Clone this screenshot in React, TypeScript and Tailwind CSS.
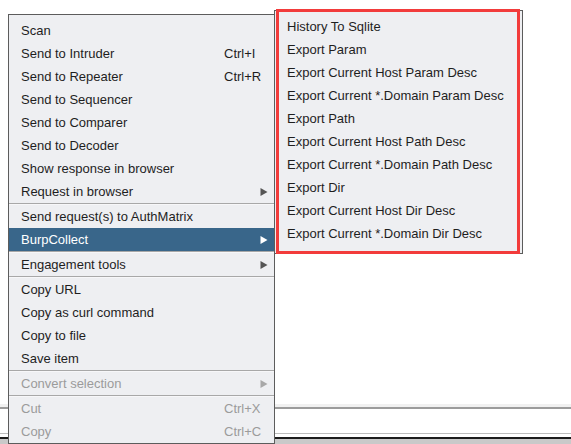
import { ReactNode } from "react";

type Item =
  | { kind: "sep" }
  | { kind: "item"; label: string; shortcut?: string; sub?: boolean; active?: boolean; disabled?: boolean };

const mainItems: Item[] = [
  { kind: "item", label: "Scan" },
  { kind: "item", label: "Send to Intruder", shortcut: "Ctrl+I" },
  { kind: "item", label: "Send to Repeater", shortcut: "Ctrl+R" },
  { kind: "item", label: "Send to Sequencer" },
  { kind: "item", label: "Send to Comparer" },
  { kind: "item", label: "Send to Decoder" },
  { kind: "item", label: "Show response in browser" },
  { kind: "item", label: "Request in browser", sub: true },
  { kind: "sep" },
  { kind: "item", label: "Send request(s) to AuthMatrix" },
  { kind: "item", label: "BurpCollect", sub: true, active: true },
  { kind: "sep" },
  { kind: "item", label: "Engagement tools", sub: true },
  { kind: "sep" },
  { kind: "item", label: "Copy URL" },
  { kind: "item", label: "Copy as curl command" },
  { kind: "item", label: "Copy to file" },
  { kind: "item", label: "Save item" },
  { kind: "sep" },
  { kind: "item", label: "Convert selection", sub: true, disabled: true },
  { kind: "sep" },
  { kind: "item", label: "Cut", shortcut: "Ctrl+X", disabled: true },
  { kind: "item", label: "Copy", shortcut: "Ctrl+C", disabled: true },
];

const subItems = [
  "History To Sqlite",
  "Export Param",
  "Export Current Host Param Desc",
  "Export Current *.Domain Param Desc",
  "Export Path",
  "Export Current Host Path Desc",
  "Export Current *.Domain Path Desc",
  "Export Dir",
  "Export Current Host Dir Desc",
  "Export Current *.Domain Dir Desc",
];

function Arrow({ color }: { color: string }) {
  return (
    <svg width="8" height="10" viewBox="0 0 8 10">
      <path d="M0.5 1 L7.5 5 L0.5 9 Z" fill={color} />
    </svg>
  );
}

function Row({ children, active, disabled }: { children: ReactNode; active?: boolean; disabled?: boolean }) {
  return (
    <div
      className={`flex h-[23px] items-center pl-[12px] ${
        active ? "bg-[#39668a] text-white" : disabled ? "text-[#9b9b9b]" : "text-[#1e1e1e]"
      }`}
    >
      {children}
    </div>
  );
}

export default function App() {
  return (
    <div
      className="relative flex h-[444px] w-[571px] flex-col overflow-hidden bg-white text-[13px]"
      style={{ fontFamily: '"Liberation Sans", Arial, sans-serif' }}
    >
      <div className="flex-1" />
      <div className="h-[3px] bg-[#f1f1f1]" />
      <div className="h-[2px] bg-[#9c9c9c]" />
      <div className="h-[24px] bg-white" />
      <div className="h-px bg-[#bdbdbd]" />
      <div className="h-[3px] bg-white" />
      <div className="h-[2px] bg-[#1c1c1c]" />
      <div className="h-[5px] bg-[#c9c9c9]" />

      {/* main context menu */}
      <div className="absolute left-[8px] top-[14px] w-[267px] border border-[#5c5c5c] bg-[#eeeff2] pt-[4px]">
        {mainItems.map((it, i) =>
          it.kind === "sep" ? (
            <div key={i} className="h-[2px] border-t border-[#a8a8a8] bg-[#f7f7f9]" />
          ) : (
            <Row key={i} active={it.active} disabled={it.disabled}>
              <span className="w-[203px] shrink-0 whitespace-nowrap">{it.label}</span>
              <span className="w-[36px] shrink-0 whitespace-nowrap">{it.shortcut ?? ""}</span>
              {it.sub && (
                <Arrow color={it.active ? "#ffffff" : it.disabled ? "#a8a8a8" : "#555555"} />
              )}
            </Row>
          )
        )}
      </div>

      {/* BurpCollect submenu */}
      <div className="absolute left-[274px] top-[10px] h-[244px] w-[249px] border border-[#5c5c5c] bg-[#eeeff2] pt-[4px]">
        {subItems.map((s) => (
          <Row key={s}>
            <span className="whitespace-nowrap">{s}</span>
          </Row>
        ))}
      </div>

      {/* red highlight box */}
      <div className="absolute left-[276px] top-[9px] h-[245px] w-[244px] border-[3px] border-[#f23b3b]" />
    </div>
  );
}
